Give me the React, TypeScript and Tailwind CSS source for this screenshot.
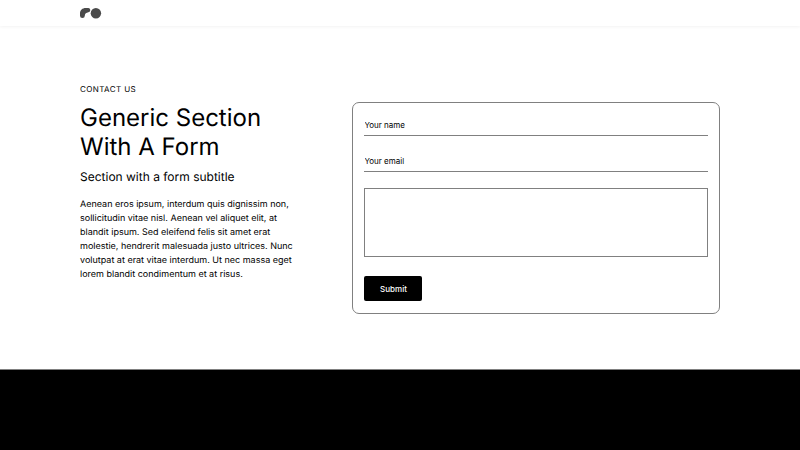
export default function App() {
  return (
    <div className="flex h-[450px] w-[800px] flex-col overflow-hidden bg-white font-['Inter',sans-serif] text-black antialiased [text-rendering:geometricPrecision]">
      <header className="relative flex h-[26px] shrink-0 items-center bg-white px-20 shadow-[0_1px_3px_rgba(0,0,0,0.05)]">
        <svg width="22" height="12" viewBox="0 0 22 12" fill="#4a4a4a" aria-label="Logo">
          <path d="M0 6.5C0 3.2 2.4 1 5.7 1H8a2.1 2.1 0 0 1 .4 4.2C6.3 5.5 4.9 6.6 4.8 8.7a2.4 2.4 0 0 1-4.8 0Z" />
          <circle cx="15.9" cy="6.2" r="5.2" />
        </svg>
      </header>
      <main className="flex h-[343px] shrink-0 items-start justify-between px-20">
        <section className="w-[230px] pt-[57px]">
          <p className="text-[8px] leading-[12px] tracking-[0.4px]">CONTACT US</p>
          <h1 className="mt-[8px] text-[24px] leading-[29px]">
            Generic Section<br />With A Form
          </h1>
          <p className="mt-[8px] text-[12px] leading-[16px]">Section with a form subtitle</p>
          <p className="mt-[13px] whitespace-nowrap text-[9px] leading-[14px]">
            Aenean eros ipsum, interdum quis dignissim non,<br />
            sollicitudin vitae nisl. Aenean vel aliquet elit, at<br />
            blandit ipsum. Sed eleifend felis sit amet erat<br />
            molestie, hendrerit malesuada justo ultrices. Nunc<br />
            volutpat at erat vitae interdum. Ut nec massa eget<br />
            lorem blandit condimentum et at risus.
          </p>
        </section>
        <form className="mt-[76px] flex h-[212px] w-[368px] flex-col rounded-[7px] border border-[#808080] px-[11px] pt-[11px]">
          <input
            aria-label="Your name"
            placeholder="Your name"
            className="h-[22px] w-full border-b border-[#808080] pl-[0.5px] text-[8px] outline-none placeholder:text-black"
          />
          <input
            aria-label="Your email"
            placeholder="Your email"
            className="mt-[14px] h-[22px] w-full border-b border-[#808080] pl-[0.5px] text-[8px] outline-none placeholder:text-black"
          />
          <textarea aria-label="Message" className="mt-4 h-[69px] w-full shrink-0 resize-none border border-[#808080] outline-none" />
          <button type="button" className="mt-[19px] h-[25px] w-[58px] rounded-[2px] bg-black pl-[1px] text-[8px] font-medium text-white">
            Submit
          </button>
        </form>
      </main>
      <footer className="flex-1 border-t border-[#808080] bg-black" />
    </div>
  );
}
